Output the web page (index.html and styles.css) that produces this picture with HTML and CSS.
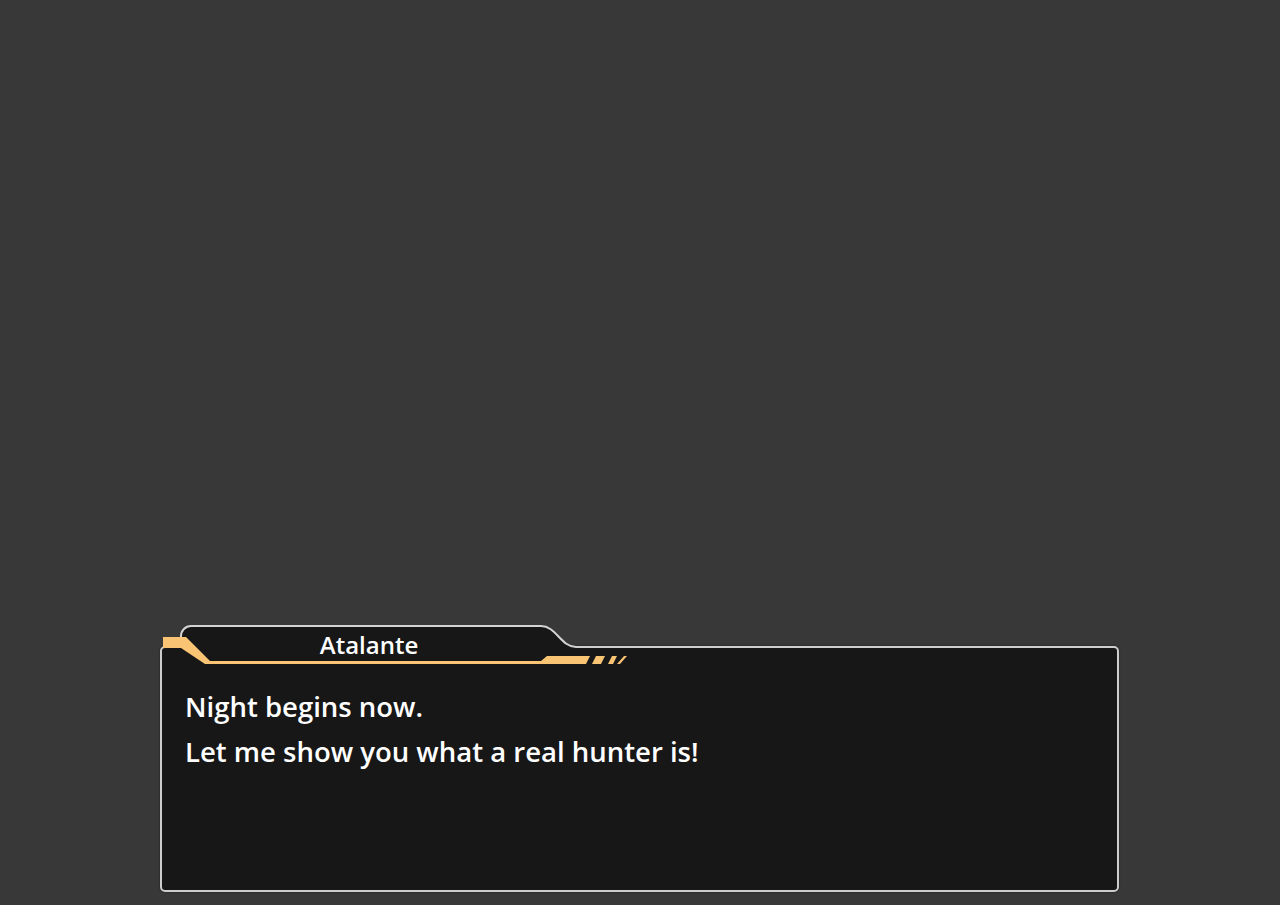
FILE: index.html
```html
<!DOCTYPE html>
<html lang="en">
<head>
  <meta charset="UTF-8" />
  <meta name="viewport" content="width=device-width, initial-scale=1.0"/>
  <title>Dialogue</title>
  <link rel="stylesheet" href="styles.css">
</head>
<body>
  <div class="stage">
    <div class="dialog">
      <div class="name-tab">
        <svg class="tab-frame" width="470" height="42" viewBox="0 0 470 42">
          <path class="tab-fill" d="M20,26 V11 A10,10 0 0 1 31,2 H381 C396,2 401,23 416,23 V26 Z"/>
          <path class="tab-line" d="M21,14 V12 A10,10 0 0 1 31,2 H381 C396,2 401,23 416,23"/>
          <polygon class="stripe" points="3,13 26,13 50,37 381,37 387,32 430,32 426,40 45,40 21,24 3,24"/>
          <polygon class="stripe" points="432,40 441,40 445,32 436,32"/>
          <polygon class="stripe" points="448,40 453,40 457,32 452,32"/>
          <polygon class="stripe" points="457,40 460,40 467,32 464,32"/>
        </svg>
        <span class="name">Atalante</span>
      </div>

      <div class="box">
        <p class="line">Night begins now.</p>
        <p class="line">Let me show you what a real hunter is!</p>
      </div>
    </div>
  </div>
</body>
</html>
```

FILE: styles.css
```css
body {
  margin: 0;
  background-color: #383838;
  font-family: "Open Sans", "Noto Sans", sans-serif;
  color: #ffffff;
}
.stage {
  height: 905px;
  padding: 624px 0 0 160px;
  box-sizing: border-box;
}
.dialog {
  position: relative;
  width: 959px;
  padding-top: 22px;
}
.name-tab {
  position: absolute;
  left: 0;
  top: 0;
  width: 470px;
  height: 42px;
}
.tab-frame {
  position: absolute;
  left: 0;
  top: 0;
}
.tab-fill {
  fill: #171717;
}
.tab-line {
  fill: none;
  stroke: #d4d4d4;
  stroke-width: 2;
}
.stripe {
  fill: #f9c574;
}
.name {
  position: relative;
  display: block;
  margin-left: 21px;
  width: 376px;
  padding-top: 6px;
  text-align: center;
  font-size: 24px;
  font-weight: 600;
  line-height: 30px;
}
.box {
  height: 246px;
  box-sizing: border-box;
  padding: 36px 23px 0;
  background: #171717;
  border: 2px solid #cdcdcd;
  border-radius: 5px;
  box-shadow: 0 0 2px rgba(0,0,0,0.6);
}
.line {
  margin: 0;
  font-size: 27.5px;
  font-weight: 600;
  line-height: 45px;
}
```
